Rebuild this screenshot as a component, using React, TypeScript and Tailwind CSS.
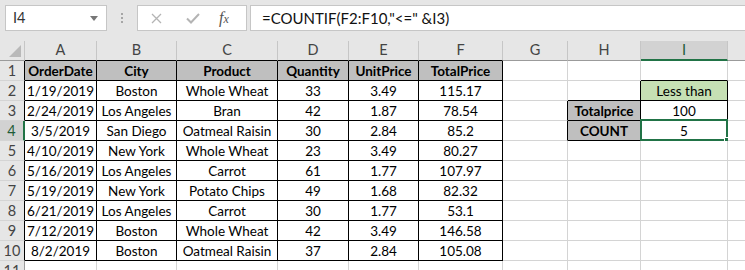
import React from "react";

// --- Sheet data ---
const COL_W = [
  "w-[72px]",
  "w-[80px]",
  "w-[101px]",
  "w-[71px]",
  "w-[70px]",
  "w-[84px]",
  "w-[65px]",
  "w-[73px]",
  "w-[87px]",
  "w-[60px]",
];
const LETTERS = ["A", "B", "C", "D", "E", "F", "G", "H", "I", "J"];

const ORDERS = [
  ["1/19/2019", "Boston", "Whole Wheat", "33", "3.49", "115.17"],
  ["2/24/2019", "Los Angeles", "Bran", "42", "1.87", "78.54"],
  ["3/5/2019", "San Diego", "Oatmeal Raisin", "30", "2.84", "85.2"],
  ["4/10/2019", "New York", "Whole Wheat", "23", "3.49", "80.27"],
  ["5/16/2019", "Los Angeles", "Carrot", "61", "1.77", "107.97"],
  ["5/19/2019", "New York", "Potato Chips", "49", "1.68", "82.32"],
  ["6/21/2019", "Los Angeles", "Carrot", "30", "1.77", "53.1"],
  ["7/12/2019", "Boston", "Whole Wheat", "42", "3.49", "146.58"],
  ["8/2/2019", "Boston", "Oatmeal Raisin", "37", "2.84", "105.08"],
];

const HEAD = ["OrderDate", "City", "Product", "Quantity", "UnitPrice", "TotalPrice"];

const inTable = (r: number, c: number) => r >= 1 && r <= 10 && c >= 0 && c <= 5;
const inBox = (r: number, c: number) =>
  (c === 8 && r >= 2 && r <= 4) || (c === 7 && r >= 3 && r <= 4);
const boxed = (r: number, c: number) => inTable(r, c) || inBox(r, c);

function cellText(r: number, c: number): string {
  if (r === 1 && c <= 5) return HEAD[c];
  if (r >= 2 && r <= 10 && c <= 5) return ORDERS[r - 2][c];
  if (r === 2 && c === 8) return "Less than";
  if (r === 3 && c === 7) return "Totalprice";
  if (r === 3 && c === 8) return "100";
  if (r === 4 && c === 7) return "COUNT";
  if (r === 4 && c === 8) return "5";
  return "";
}

const Cell = ({ r, c }: { r: number; c: number }) => {
  const text = cellText(r, c);
  const bold = (r === 1 && c <= 5) || (c === 7 && (r === 3 || r === 4));
  const gray = bold;
  const green = r === 2 && c === 8;
  const rightDark = boxed(r, c) || boxed(r, c + 1);
  const bottomDark = boxed(r, c) || boxed(r + 1, c);
  const selected = r === 4 && c === 8;

  return (
    <div
      className={`relative ${COL_W[c]} h-[20px] shrink-0 flex items-center justify-center pt-[2px] border-r border-b whitespace-nowrap ${
        rightDark ? "border-r-black" : "border-r-[#d4d4d4]"
      } ${bottomDark ? "border-b-black" : "border-b-[#d4d4d4]"} ${
        gray ? "bg-[#bfbfbf]" : green ? "bg-[#c6e0b4]" : "bg-white"
      } ${bold ? "font-bold" : ""}`}
    >
      {text}
      {selected && (
        <>
          <div className="absolute -left-[1px] -top-[2px] -right-[1px] -bottom-[1px] border-2 border-[#217346]" />
          <div className="absolute -right-[3px] -bottom-[3px] w-[6px] h-[6px] bg-[#217346] border border-white" />
        </>
      )}
    </div>
  );
};

const RowHeader = ({ r }: { r: number }) => {
  const sel = r === 4;
  return (
    <div
      className={`w-[25px] h-[20px] shrink-0 flex items-center justify-center pt-[2px] text-[14.5px] border-b border-b-[#d4d4d4] ${
        sel
          ? "bg-[#d2d2d2] border-r-2 border-r-[#217346] text-[#1e5c38]"
          : `bg-[#e6e6e6] border-r text-[#444] ${r <= 10 ? "border-r-black" : "border-r-[#9b9b9b]"}`
      }`}
    >
      {r}
    </div>
  );
};

// --- Formula bar ---
const FormulaBar = () => (
  <div className="h-[41px] bg-[#e6e6e6] flex items-start pt-[5px] pl-[5px] text-[14.5px]">
    <div className="w-[102px] h-[26px] bg-white border border-[#c6c6c6] flex items-center justify-between pl-[7px] pr-[8px]">
      <span className="text-[#333]">I4</span>
      <svg width="8" height="5" viewBox="0 0 8 5">
        <path d="M0 0h8L4 5z" fill="#777" />
      </svg>
    </div>
    <div className="w-[30px] h-[26px] flex flex-col items-center justify-center gap-[2px]">
      <span className="w-[2px] h-[2px] bg-[#a6a6a6]" />
      <span className="w-[2px] h-[2px] bg-[#a6a6a6]" />
      <span className="w-[2px] h-[2px] bg-[#a6a6a6]" />
    </div>
    <div className="w-[110px] h-[26px] bg-white border border-[#c6c6c6] flex items-center">
      <svg className="ml-[13px]" width="11" height="11" viewBox="0 0 11 11">
        <path d="M1 1l9 9M10 1l-9 9" stroke="#b4b4b4" strokeWidth="1.3" />
      </svg>
      <svg className="ml-[24px]" width="14" height="11" viewBox="0 0 14 11">
        <path d="M1 5.5l4 4L13 1" stroke="#b4b4b4" strokeWidth="2" fill="none" />
      </svg>
      <span className="ml-[19px] text-[#555] italic text-[16px] [font-family:'Liberation_Serif',serif]">
        f<span className="text-[12px]">x</span>
      </span>
    </div>
    <div className="ml-[3px] flex-1 h-[26px] bg-white border border-[#c6c6c6] border-r-0 flex items-center pl-[11px] text-[15px] text-[#111]">
      =COUNTIF(F2:F10,"&lt;=" &amp;I3)
    </div>
  </div>
);

export default function App() {
  const rows = Array.from({ length: 11 }, (_, i) => i + 1);

  return (
    <div className="w-[745px] h-[270px] overflow-hidden bg-white text-[13.5px] leading-none text-black [font-family:Lato,'Noto_Sans',sans-serif]">
      <FormulaBar />

      {/* column headers */}
      <div className="flex h-[20px] text-[14.5px]">
        <div className="w-[25px] h-[20px] shrink-0 bg-[#e6e6e6] border-r border-b border-r-[#c6c6c6] border-b-[#9b9b9b] flex items-end justify-end pr-[3px] pb-[3px]">
          <svg width="12" height="12" viewBox="0 0 12 12">
            <path d="M12 0v12H0z" fill="#b9b9b9" />
          </svg>
        </div>
        {LETTERS.map((l, c) => (
          <div
            key={l}
            className={`${COL_W[c]} h-[20px] shrink-0 flex items-center justify-center border-r border-r-[#c6c6c6] ${
              c === 8
                ? "bg-[#d2d2d2] border-b-2 border-b-[#217346] text-[#1e5c38]"
                : `bg-[#e6e6e6] border-b text-[#444] ${c <= 5 ? "border-b-black" : "border-b-[#9b9b9b]"}`
            }`}
          >
            {l}
          </div>
        ))}
      </div>

      {rows.map((r) => (
        <div key={r} className="flex">
          <RowHeader r={r} />
          {LETTERS.map((_, c) => (
            <Cell key={c} r={r} c={c} />
          ))}
        </div>
      ))}
    </div>
  );
}
